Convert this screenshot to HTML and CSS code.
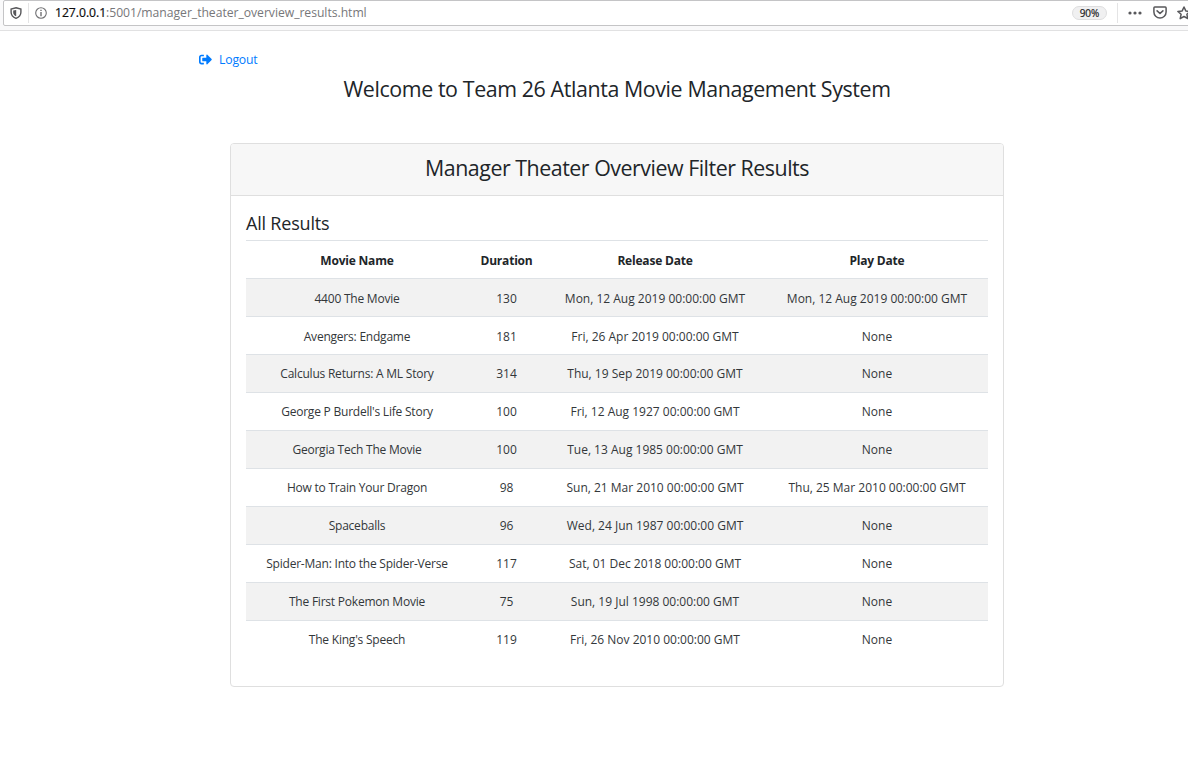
FILE: index.html
```html
<!DOCTYPE html>
<html lang="en">
<head>
<meta charset="utf-8">
<title>Manager Theater Overview</title>
<link rel="stylesheet" href="styles.css">
</head>
<body>
<header class="toolbar">
  <div class="urlbar">
    <svg class="icon-shield" width="12" height="12" viewBox="0 0 12 12"><path d="M6 .8 10.900 2v3.200c0 2.700-1.900 4.900-4.900 6.100C3 10.100 1.100 7.900 1.100 5.200V2z" fill="none" stroke="#58585b" stroke-width="1.400"/><path d="M6.200 3 3.200 3.600v1.800c0 1.700 1.100 3 3 3.900z" fill="#58585b"/></svg>
    <span class="sep"></span>
    <svg class="icon-info" width="12" height="12" viewBox="0 0 12 12"><circle cx="6" cy="6" r="5.300" fill="none" stroke="#707073" stroke-width="1.100"/><path d="M5.300 2.700h1.400v1.300H5.300zM5.300 5h1.400v4.200H5.300z" fill="#707073"/></svg>
    <span class="url"><b>127.0.0.1</b>:5001/manager_theater_overview_results.html</span>
    <span class="zoom">90%</span>
    <span class="sep sep-tall"></span>
    <svg class="icon-dots" width="14" height="4" viewBox="0 0 14 4"><g fill="#58585b"><circle cx="2" cy="2" r="1.600"/><circle cx="7" cy="2" r="1.600"/><circle cx="12" cy="2" r="1.600"/></g></svg>
    <svg class="icon-pocket" width="14" height="13" viewBox="0 0 14 13"><path d="M1.800 1h10.400c.5 0 .9.400.9.900V6a6.100 6.100 0 0 1-12.200 0V1.900c0-.5.400-.9.900-.9z" fill="none" stroke="#58585b" stroke-width="1.500"/><path d="M4.100 4.800 7 7.500l2.900-2.700" fill="none" stroke="#58585b" stroke-width="1.600" stroke-linecap="round" stroke-linejoin="round"/></svg>
    <svg class="icon-star" width="14" height="14" viewBox="0 0 14 14"><path d="m7 1 1.800 3.900 4.300.5-3.200 2.900.9 4.300L7 10.500l-3.800 2.100.9-4.300L.9 5.400l4.300-.5z" fill="none" stroke="#58585b" stroke-width="1.500" stroke-linejoin="round"/></svg>
  </div>
</header>
<main class="page">
  <a class="logout"><svg width="13" height="13" viewBox="0 0 512 512"><path fill="#007bff" d="M497 273L329 441c-15 15-41 4.500-41-17v-96H152c-13.300 0-24-10.700-24-24v-96c0-13.300 10.700-24 24-24h136V88c0-21.400 25.900-32 41-17l168 168c9.300 9.400 9.300 24.600 0 34zM192 436v-40c0-6.600-5.400-12-12-12H96c-17.700 0-32-14.300-32-32V160c0-17.700 14.300-32 32-32h84c6.600 0 12-5.400 12-12V76c0-6.600-5.400-12-12-12H96c-53 0-96 43-96 96v192c0 53 43 96 96 96h84c6.600 0 12-5.400 12-12z"/></svg><span>Logout</span></a>
  <h1 class="title"><span>Welcome to Team 26 Atlanta Movie Management System</span></h1>
  <section class="card">
    <h2 class="card-header"><span>Manager Theater Overview Filter Results</span></h2>
    <div class="card-body">
      <h3 class="subtitle"><span>All Results</span></h3>
      <table class="results">
        <colgroup><col class="c-name"><col class="c-dur"><col class="c-rel"><col class="c-play"></colgroup>
        <thead><tr><th>Movie Name</th><th>Duration</th><th>Release Date</th><th>Play Date</th></tr></thead>
        <tbody>
          <tr><td>4400 The Movie</td><td>130</td><td>Mon, 12 Aug 2019 00:00:00 GMT</td><td>Mon, 12 Aug 2019 00:00:00 GMT</td></tr>
          <tr><td>Avengers: Endgame</td><td>181</td><td>Fri, 26 Apr 2019 00:00:00 GMT</td><td>None</td></tr>
          <tr><td>Calculus Returns: A ML Story</td><td>314</td><td>Thu, 19 Sep 2019 00:00:00 GMT</td><td>None</td></tr>
          <tr><td>George P Burdell's Life Story</td><td>100</td><td>Fri, 12 Aug 1927 00:00:00 GMT</td><td>None</td></tr>
          <tr><td>Georgia Tech The Movie</td><td>100</td><td>Tue, 13 Aug 1985 00:00:00 GMT</td><td>None</td></tr>
          <tr><td>How to Train Your Dragon</td><td>98</td><td>Sun, 21 Mar 2010 00:00:00 GMT</td><td>Thu, 25 Mar 2010 00:00:00 GMT</td></tr>
          <tr><td>Spaceballs</td><td>96</td><td>Wed, 24 Jun 1987 00:00:00 GMT</td><td>None</td></tr>
          <tr><td>Spider-Man: Into the Spider-Verse</td><td>117</td><td>Sat, 01 Dec 2018 00:00:00 GMT</td><td>None</td></tr>
          <tr><td>The First Pokemon Movie</td><td>75</td><td>Sun, 19 Jul 1998 00:00:00 GMT</td><td>None</td></tr>
          <tr><td>The King's Speech</td><td>119</td><td>Fri, 26 Nov 2010 00:00:00 GMT</td><td>None</td></tr>
        </tbody>
      </table>
    </div>
  </section>
</main>
</body>
</html>
```
FILE: styles.css
```css
* { box-sizing: border-box; }
body { margin: 0; background: #fff; color: #212529; font-family: "Open Sans", "Noto Sans", sans-serif; font-size: 12px; overflow: hidden; height: 757px; }
h1, h2, h3 { margin: 0; font-weight: 400; }
svg { display: block; flex: none; }

.toolbar { height: 31px; background: #f9f9fa; border-bottom: 1px solid #e1e1e2; padding-left: 3px; overflow: hidden; }
.urlbar { height: 26px; width: 1200px; background: #fff; border: 1px solid #c4c4c6; border-radius: 2px; display: flex; align-items: center; padding: 0 0 1px 6px; }
.sep { width: 1px; height: 20px; background: #e4e4e5; margin: 0 6px; }
.url { font-size: 12.200px; letter-spacing: -.04px; color: #77777a; margin-left: 8px; width: 1017px; white-space: nowrap; }
.url b { color: #0c0c0d; font-weight: 400; -webkit-text-stroke: .2px #0c0c0d; }
.zoom { width: 35px; height: 14px; border: 1px solid #dededf; border-radius: 7px; background: #f0f0f1; font-size: 10px; line-height: 12px; text-align: center; color: #222; -webkit-text-stroke: .2px #222; flex: none; }
.sep-tall { margin: 0 10px; flex: none; }
.icon-pocket { margin-left: 11px; }
.icon-star { margin-left: 10px; }

.page { padding: 20px 184px 0 199px; }
.logout { display: flex; align-items: center; gap: 7px; height: 17px; color: #007bff; font-size: 12.200px; letter-spacing: -.15px; }
.title { height: 42px; line-height: 42px; font-size: 21.400px; letter-spacing: -.4px; text-align: center; width: 836px; white-space: nowrap; }
.card { margin: 33px 0 0 31px; width: 774px; height: 544px; border: 1px solid #dfdfdf; border-radius: 4px; }
.card-header { height: 52px; line-height: 48px; background: #f7f7f7; border-bottom: 1px solid #dfdfdf; border-radius: 3px 3px 0 0; font-size: 21.400px; letter-spacing: -.48px; text-align: center; }
.card-body { padding: 13px 15px 0; }
.subtitle { height: 31px; line-height: 29px; font-size: 18px; letter-spacing: -.2px; }
.results { width: 742px; table-layout: fixed; border-collapse: separate; border-spacing: 0; }
.c-name { width: 222px; }
.c-dur { width: 77px; }
.c-rel { width: 220px; }
.c-play { width: 223px; }
.results th, .results td { height: 38px; padding: 1px 0 0; text-align: center; border-top: 1px solid #dee2e6; line-height: 18px; white-space: nowrap; }
.results td { color: #33373a; }
.results td:first-child { letter-spacing: -.22px; }
.results th:last-child, .results td:last-child { padding-left: 1px; }
.results th, .results tbody tr:nth-child(-n+2) td { padding-top: 3px; }
.results tbody tr:nth-child(odd) { background: #f2f2f2; }
.results th { font-weight: 700; letter-spacing: -.2px; }
```
